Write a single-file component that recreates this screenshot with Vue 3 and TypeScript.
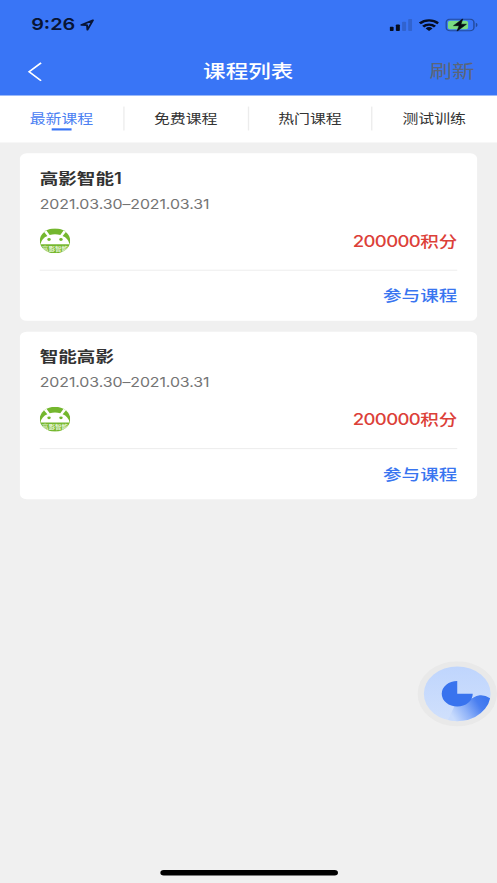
<script setup lang="ts">
import { ref } from 'vue'

interface Course {
  id: number
  name: string
  period: string
  points: number
}

const tabs: string[] = ['最新课程', '免费课程', '热门课程', '测试训练']
const activeTab = ref<number>(0)

const courses: Course[] = [
  { id: 1, name: '高影智能1', period: '2021.03.30–2021.03.31', points: 200000 },
  { id: 2, name: '智能高影', period: '2021.03.30–2021.03.31', points: 200000 },
]
</script>

<template>
  <div class="screen">
    <header class="header">
      <div class="status">
        <div class="status-left">
          <span class="time">9:26</span>
          <svg class="location" viewBox="0 0 12 12">
            <path d="M1.4 6 L10.6 1.4 L6.2 10.6 L5.9 6.1 Z" fill="none" stroke="#081434" stroke-width="1.5" stroke-linejoin="round" />
          </svg>
        </div>
        <div class="status-right">
          <svg class="signal" viewBox="0 0 17 12">
            <rect x="0" y="7.5" width="3" height="4" rx=".7" fill="#050d22" />
            <rect x="4.7" y="5.5" width="3" height="6" rx=".7" fill="#050d22" />
            <rect x="9.4" y="3" width="3" height="8.5" rx=".7" fill="#3163cf" />
            <rect x="14" y=".5" width="3" height="11" rx=".7" fill="#3163cf" />
          </svg>
          <svg class="wifi" viewBox="0 0 16 12">
            <g fill="none" stroke="#050d22" stroke-width="2.3">
              <path d="M.8 4.5 A10.3 10.3 0 0 1 15.2 4.5" />
              <path d="M3.4 7.5 A6.6 6.6 0 0 1 12.6 7.5" />
            </g>
            <path d="M5.3 9.2 A3.9 3.9 0 0 1 10.7 9.2 L8 11.8 Z" fill="#050d22" />
          </svg>
          <svg class="battery" viewBox="0 0 25 12">
            <rect x=".6" y=".6" width="21" height="10.8" rx="3" fill="none" stroke="#234b9d" stroke-width="1.1" />
            <rect x="2" y="2" width="15.2" height="8" rx="1.8" fill="#79db83" />
            <path d="M23 4 Q24.3 4.6 24.3 6 Q24.3 7.4 23 8 Z" fill="#234b9d" />
            <path d="M13.2 .3 L6.2 6.6 H10.4 L8.8 11.7 L15.9 5.3 H11.8 Z" fill="#050b12" stroke="#050b12" stroke-width=".5" />
          </svg>
        </div>
      </div>
      <div class="navbar">
        <svg class="back" viewBox="0 0 12 18">
          <path d="M11 .8 L2 9 L11 17.2" fill="none" stroke="#fff" stroke-width="1.4" />
        </svg>
        <h1 class="title">课程列表</h1>
        <span class="refresh">刷新</span>
      </div>
    </header>

    <nav class="tabs">
      <div
        v-for="(tab, index) in tabs"
        :key="tab"
        class="tab"
        :class="{ active: index === activeTab }"
        @click="activeTab = index"
      >
        <span class="tab-label">{{ tab }}</span>
      </div>
    </nav>

    <main class="list">
      <article v-for="course in courses" :key="course.id" class="card">
        <h2 class="name">{{ course.name }}</h2>
        <div class="period">{{ course.period }}</div>
        <div class="summary">
          <svg class="avatar" viewBox="0 0 46 46">
            <clipPath :id="`disc-${course.id}`"><circle cx="23" cy="23" r="23" /></clipPath>
            <g :clip-path="`url(#disc-${course.id})`">
              <rect width="46" height="46" fill="#74b72e" />
              <path d="M1 29 Q3 18 11.5 14 L6 6 L9.5 3 L15 12 Q23 9.5 31 12 L36.5 3 L40 6 L34.5 14 Q43 18 45 29 Z" fill="#fff" />
              <circle cx="14" cy="20.5" r="2.6" fill="#74b72e" />
              <circle cx="32" cy="20.5" r="2.6" fill="#74b72e" />
              <text x="23" y="41" text-anchor="middle" class="avatar-text">高影智能</text>
            </g>
          </svg>
          <span class="points"><span class="amount">{{ course.points }}</span>积分</span>
        </div>
        <div class="action"><span>参与课程</span></div>
      </article>
    </main>

    <div class="assist">
      <svg viewBox="0 0 60 60">
        <defs>
          <linearGradient id="tail" x1="0" y1=".7" x2="1" y2=".3">
            <stop offset=".05" stop-color="#c9dcfd" />
            <stop offset=".4" stop-color="#8fb2f8" />
            <stop offset=".75" stop-color="#4a7ff0" />
            <stop offset="1" stop-color="#3b75ee" />
          </linearGradient>
          <linearGradient id="disc" x1="0" y1="0" x2="0" y2="1">
            <stop offset="0" stop-color="#bfd5fd" />
            <stop offset="1" stop-color="#d0e0fc" />
          </linearGradient>
        </defs>
        <circle cx="30" cy="30" r="30" fill="#e9e9e9" />
        <circle cx="30" cy="30" r="25.2" fill="url(#disc)" />
        <path d="M28 41 C37 41 40 32.5 47 31.4 Q51 31 54.8 34 A25.2 25.2 0 0 1 23 54.2 Z" fill="url(#tail)" />
        <path d="M30 18.3 V30 H41.7 A11.7 11.7 0 1 1 30 18.3 Z" fill="#3973ee" />
      </svg>
    </div>
    <div class="home-indicator"></div>
  </div>
</template>

<style>
html,
body {
  margin: 0;
  height: 883px;
  overflow: hidden;
  background: #f0f0f0;
}
</style>

<style scoped>
/* 375 × 812 phone canvas, stretched to fill the window */
.screen {
  position: relative;
  width: 375px;
  height: 812px;
  transform: scale(1.32533, 1.08744);
  transform-origin: 0 0;
  background: #f0f0f0;
  color: #333;
  font-family: Inter, "Noto Sans CJK SC", sans-serif;
}
.header {
  height: 87.7px;
  background: #3975f6;
}
.status {
  display: flex;
  justify-content: space-between;
  align-items: center;
  box-sizing: border-box;
  height: 44px;
  padding: 1px 14px 0 23.5px;
}
.status-left,
.status-right {
  display: flex;
  align-items: center;
}
.time {
  font-size: 15px;
  font-weight: 600;
  line-height: 20px;
  color: #081434;
}
.location {
  width: 11.5px;
  height: 12px;
  margin-left: 2.8px;
}
.signal {
  width: 17px;
  height: 12px;
  margin-right: 5px;
}
.wifi {
  width: 15.5px;
  height: 12px;
  margin-right: 5px;
}
.battery {
  width: 25px;
  height: 12px;
}
.navbar {
  display: grid;
  grid-template-columns: 1fr auto 1fr;
  align-items: center;
  height: 43px;
  padding: 0 17px 0 20px;
}
.back {
  width: 12px;
  height: 18px;
}
.title {
  margin: 0 3.5px 0 0;
  font-size: 17px;
  font-weight: 500;
  line-height: 24px;
  color: #fff;
}
.refresh {
  justify-self: end;
  font-size: 17px;
  line-height: 24px;
  color: #5b6579;
}
.tabs {
  display: flex;
  height: 43px;
  background: #fff;
}
.tab {
  display: grid;
  flex: 1;
  grid-template-columns: 1fr 1px;
  align-items: center;
  justify-items: center;
}
.tab:not(:last-child)::after {
  content: "";
  width: 1px;
  height: 22px;
  background: #ececec;
}
.tab-label {
  display: flex;
  flex-direction: column;
  align-items: center;
  padding-bottom: 1px;
  font-size: 12px;
  line-height: 18px;
}
.active {
  color: #4a80f2;
}
.active .tab-label::after {
  content: "";
  width: 15px;
  height: 2px;
  margin-bottom: -2px;
  background: #3975f6;
}
.list {
  display: flex;
  flex-direction: column;
  gap: 10px;
  padding: 10px 15px;
}
.card {
  box-sizing: border-box;
  height: 154.2px;
  padding: 13px 15px 0;
  border-radius: 5px;
  background: #fff;
}
.name {
  margin: 0;
  font-size: 14px;
  font-weight: 600;
  line-height: 20px;
}
.period {
  margin-top: 5px;
  font-size: 12px;
  line-height: 18px;
  letter-spacing: -0.07px;
  color: #747474;
}
.summary {
  display: flex;
  align-items: center;
  justify-content: space-between;
  height: 23px;
  padding: 13px 0 15px;
  border-bottom: 1px solid #eee;
}
.avatar {
  width: 23px;
  height: 23px;
}
.avatar-text {
  font-size: 10px;
  font-weight: 700;
  fill: #e8f5d8;
}
.points {
  padding-bottom: 1px;
  font-size: 14px;
  font-weight: 500;
  color: #dc4038;
}
.amount {
  letter-spacing: -0.5px;
}
.action {
  display: flex;
  align-items: center;
  justify-content: flex-end;
  height: 44px;
  font-size: 14px;
  font-weight: 500;
  color: #3975f0;
}
.assist {
  position: absolute;
  top: 607.5px;
  left: 315.3px;
  width: 60px;
  height: 60px;
}
.assist svg {
  display: block;
  width: 100%;
  height: 100%;
}
.home-indicator {
  position: absolute;
  bottom: 7.5px;
  left: 120.5px;
  width: 134px;
  height: 5px;
  border-radius: 3px;
  background: #000;
}
</style>
